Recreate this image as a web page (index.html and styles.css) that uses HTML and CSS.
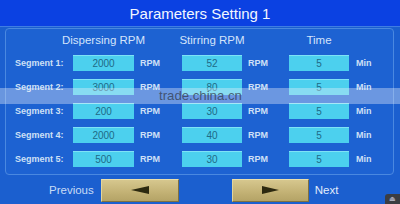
FILE: index.html
```html
<!DOCTYPE html>
<html>
<head>
  <meta name="viewport" content="width=device-width, initial-scale=1">
  <title>Parameters Setting 1</title>
  <link rel="stylesheet" href="styles.css">
</head>
<body>
  <div class="screen">
    <div class="title">Parameters Setting 1</div>
    <div class="panel">
      <div class="grid">
        <div></div><div class="head">Dispersing RPM</div><div></div><div class="head">Stirring RPM</div><div></div><div class="head">Time</div><div></div>

        <div class="label">Segment 1:</div><div class="val">2000</div><div class="unit">RPM</div><div class="val">52</div><div class="unit">RPM</div><div class="val">5</div><div class="unit min">Min</div>
        <div class="label">Segment 2:</div><div class="val">3000</div><div class="unit">RPM</div><div class="val">80</div><div class="unit">RPM</div><div class="val">5</div><div class="unit min">Min</div>
        <div class="label">Segment 3:</div><div class="val">200</div><div class="unit">RPM</div><div class="val">30</div><div class="unit">RPM</div><div class="val">5</div><div class="unit min">Min</div>
        <div class="label">Segment 4:</div><div class="val">2000</div><div class="unit">RPM</div><div class="val">40</div><div class="unit">RPM</div><div class="val">5</div><div class="unit min">Min</div>
        <div class="label">Segment 5:</div><div class="val">500</div><div class="unit">RPM</div><div class="val">30</div><div class="unit">RPM</div><div class="val">5</div><div class="unit min">Min</div>
      </div>
    </div>
    <div class="nav">
      <span class="nav-text prev">Previous</span>
      <div class="btn"><span class="arrow left"></span></div>
      <div class="btn next-btn"><span class="arrow right"></span></div>
      <span class="nav-text next">Next</span>
    </div>
  </div>
  <div class="watermark"><span>trade.china.cn</span></div>
  <div class="corner-tab">⏏</div>
</body>
</html>
```

FILE: styles.css
```css
html, body {margin: 0; padding: 0;}
body {width: 400px; height: 204px; overflow: hidden; background: #1b5fcf; font-family: "Liberation Sans", Arial, sans-serif; position: relative;}

.screen {display: flex; flex-direction: column; height: 204px;}

.title {height: 26px; line-height: 27px; background: #0b41e2; color: #f2f6ff; font-size: 15px; text-align: center; border-bottom: 1px solid #3f7de2;}

.panel {margin: 1px 6px 0 5px; border: 1px solid #4a88e0; border-radius: 4px; padding: 4px 0 7px 0; background: #1d62d2;}

.grid {display: grid; grid-template-columns: 67px 61px 48px 60px 47px 60px 1fr; grid-template-rows: 14px repeat(5, 16px); row-gap: 8px; align-items: center;}
.grid .head {margin: 0 -40px -6px; align-self: start; text-align: center; font-size: 11.5px; line-height: 14px; color: #d4e4fb; white-space: nowrap;}

.label {padding-left: 9px; font-size: 9px; font-weight: bold; color: #cfe0f6; white-space: nowrap;}
.val {height: 16px; line-height: 16px; background: #4cd0ee; border-top: 1px solid #7ee2f6; box-sizing: border-box; text-align: center; font-size: 10px; color: #1f6a86;}
.unit {padding-left: 6px; font-size: 9px; font-weight: bold; color: #cfe0f6;}
.unit.min {padding-left: 7px; font-size: 9px;}

.nav {flex: 1; display: flex; align-items: center; padding-left: 49px; padding-top: 1px;}
.nav-text {font-size: 11.5px; color: #c8dcf6;}
.nav-text.next {color: #e2ecfb; margin-left: 6px;}
.btn {width: 78px; height: 23px; box-sizing: border-box; margin-left: 7px; background: linear-gradient(#d6c78e, #c2b174 60%, #b4a366); border: 1px solid #7f7040; border-top-color: #ece0ac; border-left-color: #e2d59c; display: flex; align-items: center; justify-content: center;}
.btn.next-btn {margin-left: 53px; width: 77px;}
.arrow {width: 0; height: 0; border-top: 4px solid transparent; border-bottom: 4px solid transparent;}
.arrow.left {border-right: 18px solid #2c2910;}
.arrow.right {border-left: 17px solid #2c2910;}

.watermark {position: absolute; left: 0; right: 0; top: 88px; height: 16px; background: rgba(235, 240, 250, 0.38); line-height: 16px;}
.watermark span {position: absolute; left: 159px; font-size: 13.2px; color: rgba(55, 65, 85, 0.8);}

.corner-tab {position: absolute; right: 0; bottom: 0; width: 15px; height: 10px; background: #3b3d42; border-radius: 3px 0 0 0; color: #aab; font-size: 7px; line-height: 10px; text-align: center;}
```
